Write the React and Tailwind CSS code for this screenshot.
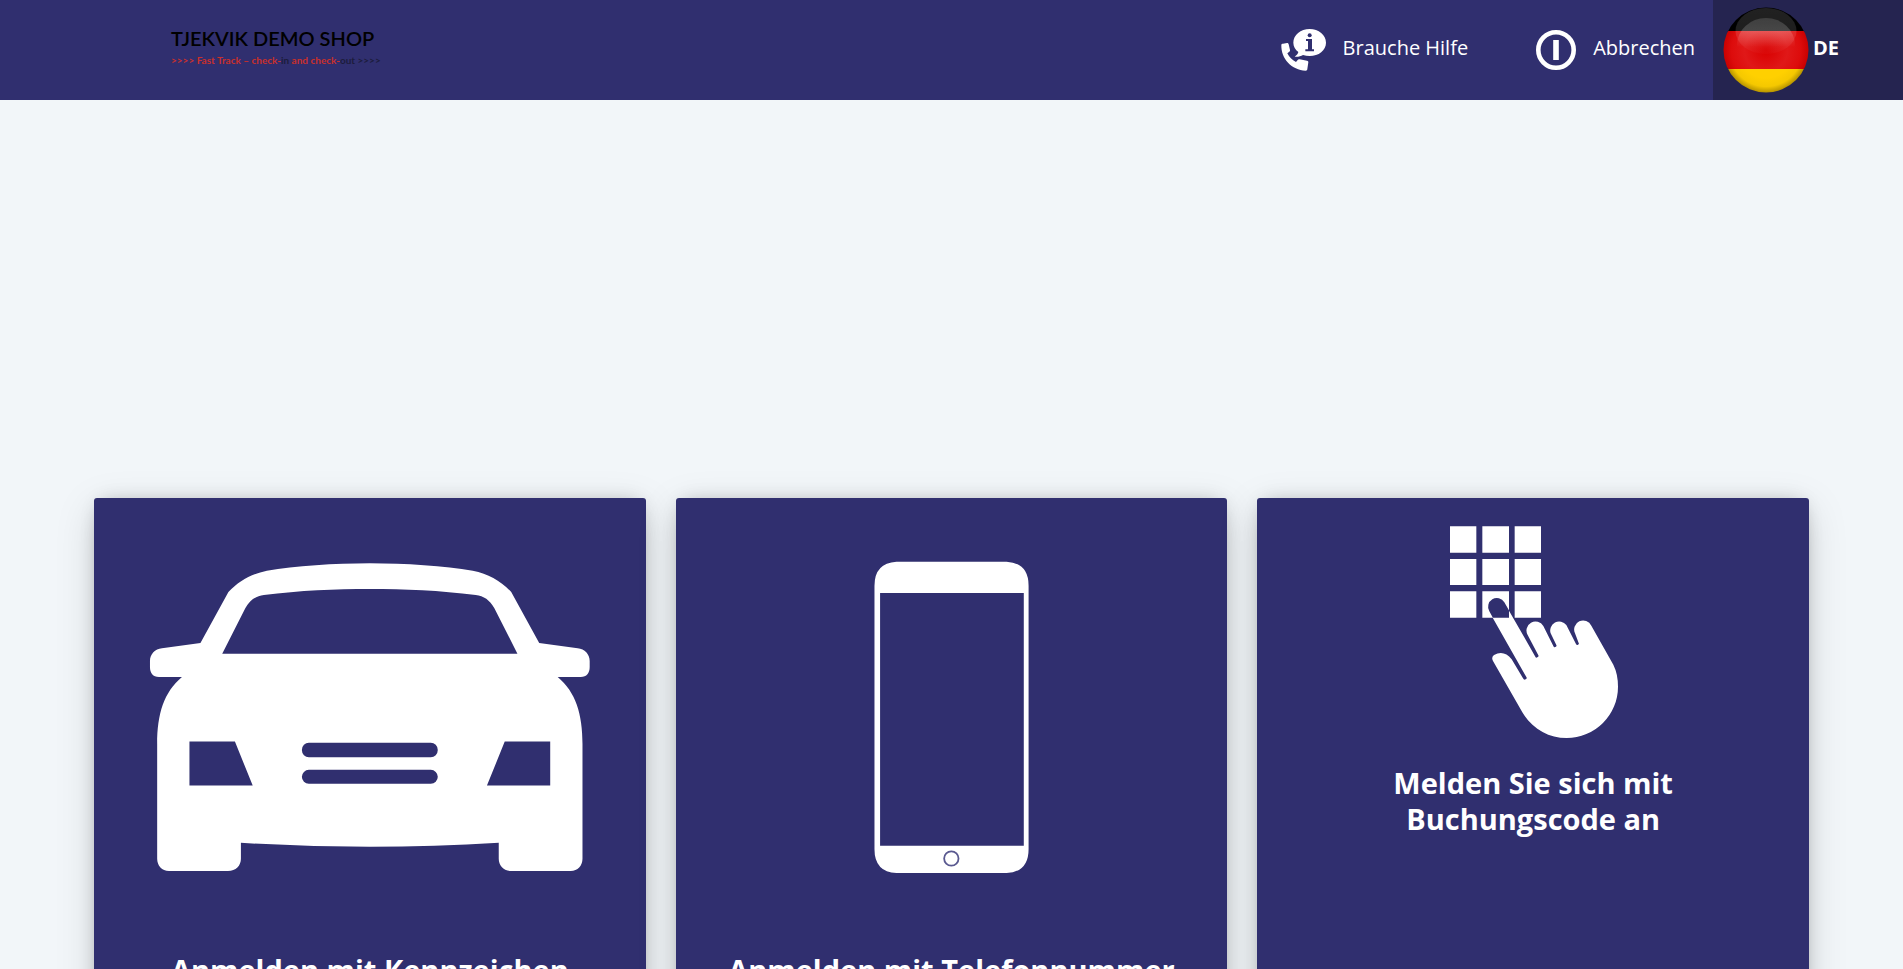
function HelpIcon() {
  return (
    <svg viewBox="65 56 135 126" className="h-[42px] w-[45px] shrink-0" aria-hidden="true">
      <path fill="#fff" d="M151 56c27 0 49 18 49 41s-22 40-49 40c-7 0-14-1-20-3-7 4-15 6-25 5 6-4 10-9 11-14-9-7-15-17-15-28 0-23 22-41 49-41Z" />
      <path fill="#fff" d="M66 104c0-3 2-4 5-4l12-2c3 0 4 1 5 4l4 17c0 3 0 4-3 6l-5 4c6 12 14 20 26 26l5-6c2-2 3-3 6-2l22 4c3 1 4 2 4 5l-3 20c0 3-2 5-5 5-42-2-74-35-73-77Z" />
      <ellipse cx="151" cy="75" rx="6" ry="6" fill="#302f6f" />
      <path fill="#302f6f" d="M140 86h18v31h6v6h-26v-6h8V92h-6Z" />
    </svg>
  );
}

function PowerIcon() {
  return (
    <svg viewBox="0 0 40 40" className="size-10 shrink-0" aria-hidden="true">
      <circle cx="20" cy="20" r="17.7" fill="none" stroke="#fff" strokeWidth="4.6" />
      <rect x="17.2" y="10" width="5.6" height="20" fill="#fff" />
    </svg>
  );
}

function GermanFlag() {
  return (
    <svg viewBox="0 0 86 86" className="size-[86px] shrink-0" aria-hidden="true">
      <defs>
        <clipPath id="flag-disc">
          <circle cx="43" cy="43" r="42.5" />
        </clipPath>
        <radialGradient id="flag-red" gradientUnits="userSpaceOnUse" cx="43" cy="43" r="43">
          <stop offset="0" stopColor="#d90000" />
          <stop offset="0.5" stopColor="#e01818" />
          <stop offset="0.8" stopColor="#dd0c0c" />
          <stop offset="1" stopColor="#c80000" />
        </radialGradient>
        <radialGradient id="flag-gold" gradientUnits="userSpaceOnUse" cx="43" cy="43" r="43">
          <stop offset="0.65" stopColor="#ffd000" />
          <stop offset="0.85" stopColor="#f5c800" />
          <stop offset="1" stopColor="#b08e00" />
        </radialGradient>
        <linearGradient id="flag-dome" x1="0" y1="0" x2="0" y2="1">
          <stop offset="0" stopColor="#fff" stopOpacity="0.13" />
          <stop offset="0.5" stopColor="#fff" stopOpacity="0.12" />
          <stop offset="1" stopColor="#fff" stopOpacity="0.02" />
        </linearGradient>
        <linearGradient id="flag-gloss" gradientUnits="userSpaceOnUse" x1="0" y1="11" x2="0" y2="40">
          <stop offset="0" stopColor="#fff" stopOpacity="0.14" />
          <stop offset="0.45" stopColor="#fff" stopOpacity="0.18" />
          <stop offset="1" stopColor="#fff" stopOpacity="0" />
        </linearGradient>
      </defs>
      <g clipPath="url(#flag-disc)">
        <rect width="86" height="25" fill="#000" />
        <rect y="24" width="86" height="38" fill="url(#flag-red)" />
        <rect y="62" width="86" height="24" fill="url(#flag-gold)" />
        <ellipse cx="43" cy="24" rx="30.5" ry="23" fill="url(#flag-dome)" />
        <ellipse cx="43" cy="38" rx="29" ry="27" fill="url(#flag-gloss)" />
      </g>
    </svg>
  );
}

function CarIcon() {
  return (
    <svg viewBox="94 564 552 309" className="w-full" aria-hidden="true">
      <path
        fill="#fff"
        fillRule="evenodd"
        d="M370 564.3C335 564.3 295 567 267 571.7C251 575 239 582 228.5 593L200.5 644L162 649.2C155 650 150 655 150 662V668C150 674 153 678 159 678H182C164 693 157.2 715 157.2 745V860C157.2 867 162 872.3 169 872.3H228C236 872.3 241 867 241 860V844Q370 852 499 844V860C499 867 504 872.3 512 872.3H571C578 872.3 582.8 867 582.8 860V745C582.8 715 576 693 558 678H581C587 678 590 674 590 668V662C590 655 585 650 578 649.2L539.5 644L511.500 593C501 582 489 575 473 571.7C445 567 405 564.300 370 564.300Z
        M222.300 654.800L245.500 609C250 601 256 597 264 596C300 591.500 335 590 370 590C405 590 440 591.500 476 596C484 597 490 601 494.500 609L517.700 654.800Z
        M189.500 742.700H235L252.800 786.700H189.500Z
        M550.500 742.700H505L487.200 786.700H550.500Z
        M309 743.800H431A7 7.300 0 0 1 431 758.400H309A7 7.300 0 0 1 309 743.800Z
        M309 771H431A7 7 0 0 1 431 785H309A7 7 0 0 1 309 771Z"
      />
    </svg>
  );
}

function PhoneIcon() {
  return (
    <svg viewBox="676 564 552 309" className="w-full overflow-visible" aria-hidden="true">
      <path
        fill="#fff"
        fillRule="evenodd"
        d="M896.600 562.700H1006.800Q1028.800 564 1028.800 586.700V850.300Q1028.800 873 1006.800 874.300H896.600Q874.600 873 874.600 850.300V586.700Q874.600 564 896.600 562.700ZM880.200 594V847H1024V594Z"
      />
      <circle cx="951.500" cy="859.700" r="7.200" fill="none" stroke="#5a5990" strokeWidth="1.800" />
    </svg>
  );
}

function KeypadIcon() {
  return (
    <svg viewBox="60 48 504 639" className="h-[213px] w-[168px]" aria-hidden="true">
      <g fill="#fff">
        <path d="M60 49h79v79H60zM157 49h80v79h-80zM254 49h79v79h-79zM60 147h79v78H60zM157 147h80v78h-80zM254 147h79v78h-79zM60 244h79v79H60zM157 244h80v79h-80zM254 244h79v79h-79z" />
      </g>
      <path fill="#302f6f" d="M189 324L178 304A26 26 0 0 1 223 277L238 303V324Z" />
      <path
        fill="#fff"
        d="M188 323H237V302L316 440Q318 445 322 442Q327 440 325 436L293 375A27 27 0 0 1 340 348L370 408Q372 413 376 411Q381 409 379 405L362 370A27 27 0 0 1 409 345L438 402Q440 406 444 404Q448 402 446 399L435 370A27 27 0 0 1 484 347L550 464Q564 492 564 530A154 154 0 0 1 410 684C355 684 307 656 277 607L189 453Q183 442 192 435Q222 419 245 448L279 505Q282 511 287 508Q292 505 289 501Z"
      />
    </svg>
  );
}

function Card({ title, children, compact }) {
  return (
    <a
      href="#"
      className="flex min-h-[560px] min-w-0 flex-col items-center rounded-[3px] bg-[#302f6f] text-center text-white shadow-[0_10px_40px_0_rgba(0,0,0,0.13),0_16px_24px_-8px_rgba(0,0,0,0.12),0_-2px_18px_-8px_rgba(0,0,0,0.3)]"
    >
      <div className={compact ? "pt-7 pl-px" : "w-full pt-[65px]"}>{children}</div>
      <h2
        className={
          compact
            ? "mt-[26px] max-w-80 text-[29px] leading-9 font-bold"
            : "mt-20 px-6 text-[29px] leading-9 font-bold"
        }
      >
        {title}
      </h2>
    </a>
  );
}

export default function App() {
  return (
    <div className="min-h-screen bg-[#f2f6f9] font-['Open_Sans','Noto_Sans',sans-serif]">
      <header className="flex h-25 items-stretch justify-between bg-[#302f6f] text-xl text-white">
        <a href="#" className="flex flex-col pt-6 pl-[171px] font-['Lato',sans-serif] whitespace-nowrap">
          <span className="text-[20px] leading-7 font-semibold text-black">TJEKVIK DEMO SHOP</span>
          <span className="text-[10px] leading-4 font-bold text-[#c9302c]">
            &gt;&gt;&gt;&gt; Fast Track – check-<span className="text-[#1c1c3c]">in</span> and check-
            <span className="text-[#1c1c3c]">out &gt;&gt;&gt;&gt;</span>
          </span>
        </a>
        <nav className="flex items-stretch">
          <button type="button" className="flex items-center gap-[17px] pr-[68px]">
            <HelpIcon />
            <span className="-mt-1">Brauche Hilfe</span>
          </button>
          <button type="button" className="flex items-center gap-[17px] pr-[18px]">
            <PowerIcon />
            <span className="-mt-1">Abbrechen</span>
          </button>
          <button type="button" className="flex w-[190px] items-center gap-1 bg-[#252450] pl-[10px] font-bold">
            <GermanFlag />
            <span className="-mt-1">DE</span>
          </button>
        </nav>
      </header>
      <main className="grid grid-cols-3 gap-[30px] px-[94px] pt-[398px]">
        <Card title="Anmelden mit Kennzeichen">
          <CarIcon />
        </Card>
        <Card title="Anmelden mit Telefonnummer">
          <PhoneIcon />
        </Card>
        <Card title="Melden Sie sich mit Buchungscode an" compact>
          <KeypadIcon />
        </Card>
      </main>
    </div>
  );
}
